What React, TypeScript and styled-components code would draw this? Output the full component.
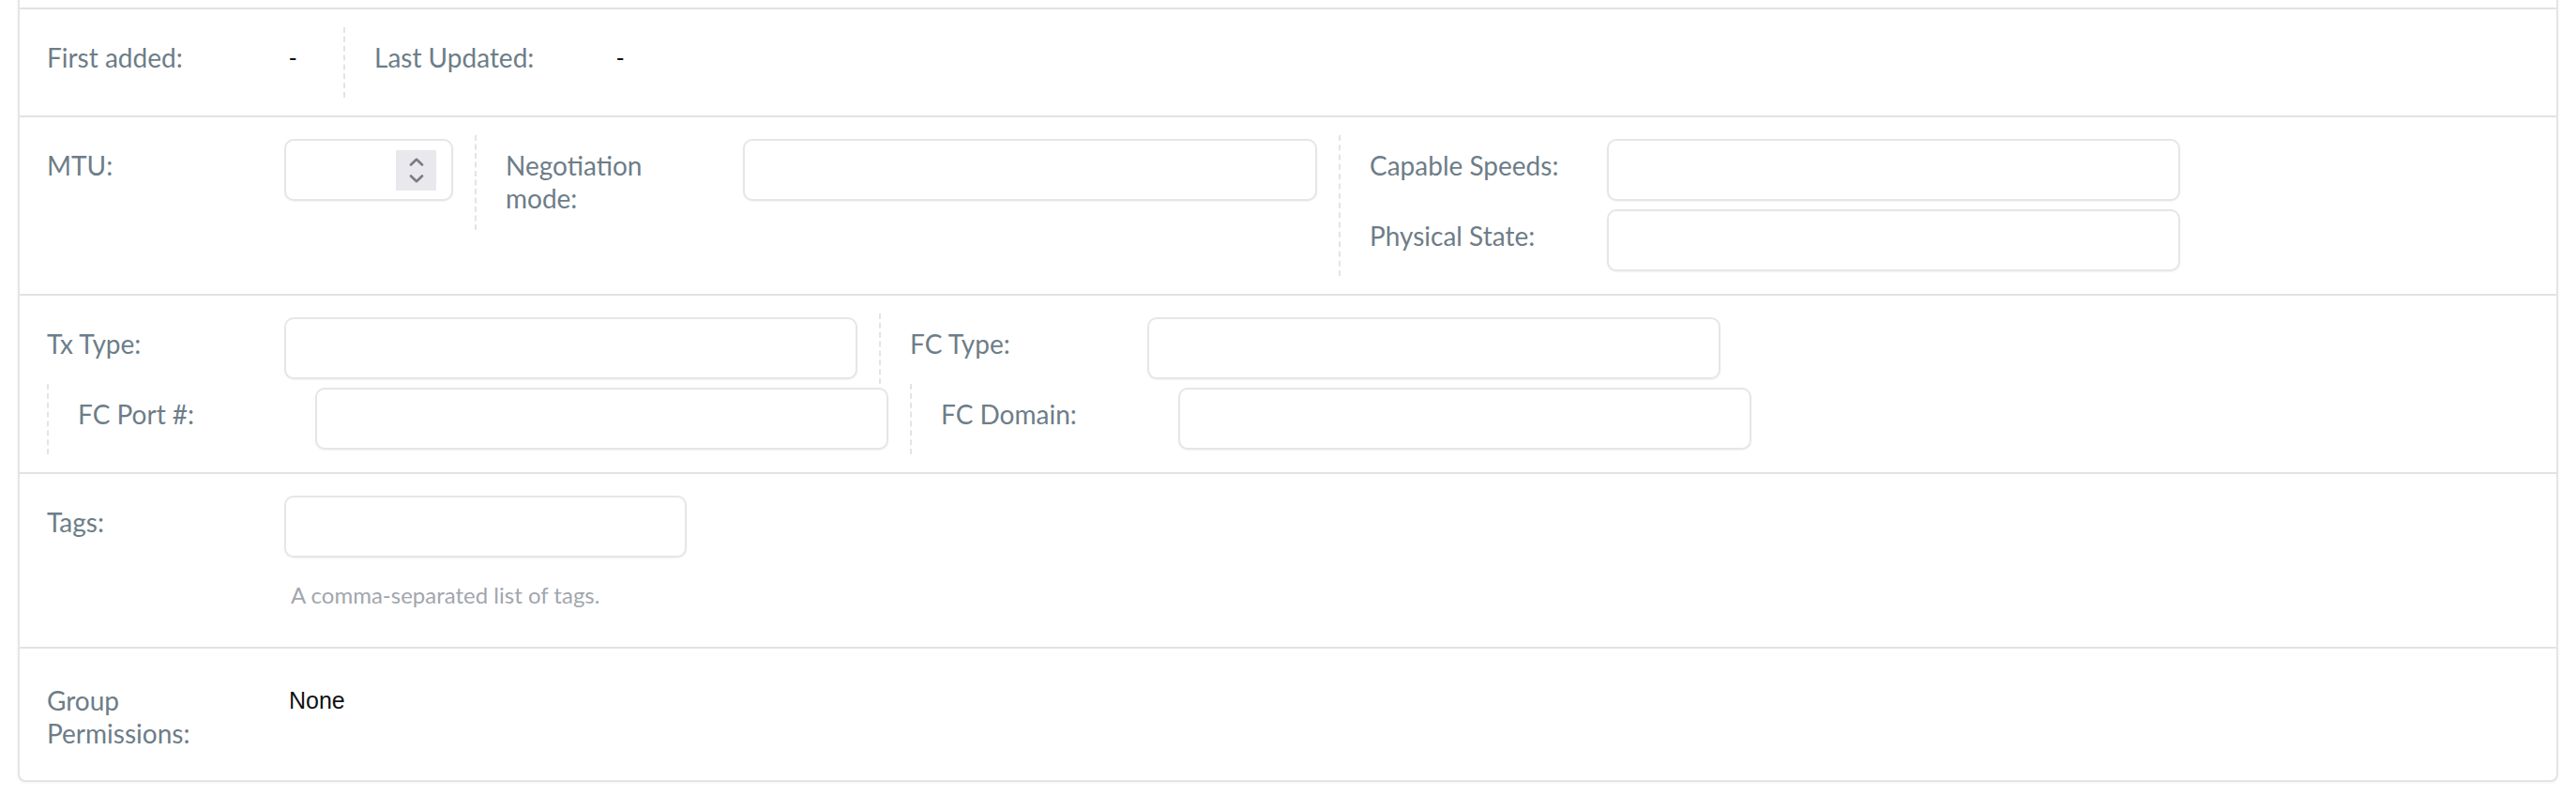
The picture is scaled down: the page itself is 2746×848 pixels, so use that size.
import React from "react";
import styled, { createGlobalStyle } from "styled-components";

const GlobalStyle = createGlobalStyle`
  html, body {
    margin: 0;
    padding: 0;
    background: #ffffff;
    font-family: "Lato", "Liberation Sans", sans-serif;
  }
`;

const Page = styled.div`
  padding: 0 19px 14px 19px;
  overflow: hidden;
`;

const Card = styled.div`
  margin-top: -30px;
  background: #fff;
  border: 2px solid #e3e5e7;
  border-radius: 0 0 8px 8px;
  box-shadow: 0 1px 3px rgba(0, 0, 0, 0.06);
`;

const Section = styled.div<{ $stub?: boolean }>`
  height: ${(p) => (p.$stub ? "36px" : "auto")};
  padding: ${(p) => (p.$stub ? "0" : "19px 31px 19px 29px")};
  border-bottom: 2px solid #dee3e7;
  display: flex;
  flex-wrap: wrap;
  align-items: flex-start;

  &:last-child {
    border-bottom: none;
    padding-top: 23px;
    padding-bottom: 16px;
  }
`;

const Group = styled.div`
  display: flex;
  flex-direction: column;
  margin-right: 23px;
  border-left: 2px dashed #e2e4e6;
  padding-left: 31px;

  &:first-child {
    border-left: none;
    padding-left: 0;
  }
`;

const Field = styled.div`
  display: flex;
  align-items: flex-start;
  padding: 4px 0 5px;
  min-height: 66px;
`;

const Label = styled.label`
  width: 222px;
  flex-shrink: 0;
  margin-right: 31px;
  padding: 11px 0;
  font-size: 28px;
  line-height: 35px;
  color: #6d7d88;
`;

const Value = styled.div`
  padding: 11px 5px;
  font-family: "Liberation Sans", Arial, sans-serif;
  font-size: 25px;
  line-height: 35px;
  color: #111;
  min-width: 30px;
`;

const Control = styled.div`
  display: flex;
  flex-direction: column;
`;

const InputShell = styled.div<{ $w: number }>`
  width: ${(p) => p.$w}px;
  height: 66px;
  box-sizing: border-box;
  display: flex;
  align-items: center;
  border: 2px solid #e6e6e6;
  border-radius: 10px;
  box-shadow: 0 1px 2px rgba(0, 0, 0, 0.05);
  background: #fff;
  padding: 0 16px 0 14px;
`;

const TextInput = styled.input`
  flex: 1;
  min-width: 0;
  border: none;
  outline: none;
  background: transparent;
  font-family: "Lato", sans-serif;
  font-size: 26px;
  color: #333;
  padding: 0;
`;

const Spinner = styled.span`
  width: 43px;
  height: 43px;
  flex-shrink: 0;
  background: #e9e9ed;
  display: flex;
  flex-direction: column;
  align-items: center;
  justify-content: center;
  gap: 9px;
`;

const Help = styled.div`
  margin: 23px 0 15px 7px;
  font-size: 24px;
  line-height: 33px;
  color: #a2a6ae;
`;

const Chevron = ({ up }: { up?: boolean }) => (
  <svg width="16" height="9" viewBox="0 0 16 9">
    <path
      d={up ? "M2 7.5 L8 1.8 L14 7.5" : "M2 1.5 L8 7.2 L14 1.5"}
      fill="none"
      stroke="#7b7b87"
      strokeWidth="2.6"
      strokeLinecap="round"
      strokeLinejoin="round"
    />
  </svg>
);

interface InputFieldProps {
  label: string;
  width: number;
  number?: boolean;
  help?: string;
}

const InputField = ({ label, width, number, help }: InputFieldProps) => (
  <Field>
    <Label>{label}</Label>
    <Control>
      <InputShell $w={width}>
        <TextInput type="text" />
        {number && (
          <Spinner>
            <Chevron up />
            <Chevron />
          </Spinner>
        )}
      </InputShell>
      {help && <Help>{help}</Help>}
    </Control>
  </Field>
);

const TextField = ({ label, value }: { label: string; value: string }) => (
  <Field>
    <Label>{label}</Label>
    <Value>{value}</Value>
  </Field>
);

const App = () => {
  return (
    <Page>
      <GlobalStyle />
      <Card>
        <Section $stub />
        <Section>
          <Group>
            <TextField label="First added:" value="-" />
          </Group>
          <Group>
            <TextField label="Last Updated:" value="-" />
          </Group>
        </Section>
        <Section>
          <Group>
            <InputField label="MTU:" width={180} number />
          </Group>
          <Group>
            <InputField label="Negotiation mode:" width={612} />
          </Group>
          <Group>
            <InputField label="Capable Speeds:" width={611} />
            <InputField label="Physical State:" width={611} />
          </Group>
        </Section>
        <Section>
          <Group>
            <InputField label="Tx Type:" width={611} />
          </Group>
          <Group>
            <InputField label="FC Type:" width={611} />
          </Group>
          <Group>
            <InputField label="FC Port #:" width={611} />
          </Group>
          <Group>
            <InputField label="FC Domain:" width={611} />
          </Group>
        </Section>
        <Section>
          <Group>
            <InputField
              label="Tags:"
              width={429}
              help="A comma-separated list of tags."
            />
          </Group>
        </Section>
        <Section>
          <Group>
            <TextField label="Group Permissions:" value="None" />
          </Group>
        </Section>
      </Card>
    </Page>
  );
};

export default App;
